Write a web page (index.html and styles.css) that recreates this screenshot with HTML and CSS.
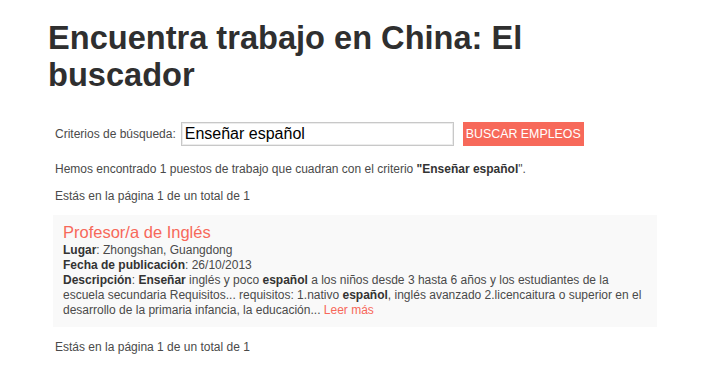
FILE: index.html
```html
<!DOCTYPE html>
<html lang="es">
<head>
<meta charset="utf-8">
<title>Encuentra trabajo en China: El buscador</title>
<link rel="stylesheet" href="styles.css">
</head>
<body>
<div class="page">
  <h1 class="title">Encuentra trabajo en China: El buscador</h1>
  <div class="content">
    <form class="search" onsubmit="return false">
      <label class="search-label" for="q">Criterios de búsqueda:</label>
      <input class="search-input" id="q" type="text" value="Enseñar español">
      <button class="search-btn" type="submit">Buscar empleos</button>
    </form>
    <p class="info">Hemos encontrado 1 puestos de trabajo que cuadran con el criterio <b>"Enseñar español</b>".</p>
    <p class="info pages-top">Estás en la página 1 de un total de 1</p>
    <div class="job">
      <a class="job-title" href="#">Profesor/a de Inglés</a>
      <div class="job-line"><b>Lugar</b>: Zhongshan, Guangdong</div>
      <div class="job-line"><b>Fecha de publicación</b>: 26/10/2013</div>
      <div class="job-line"><b>Descripción</b>: <b>Enseñar</b> inglés y poco <b>español</b> a los niños desde 3 hasta 6 años y los estudiantes de la escuela secundaria Requisitos... requisitos: 1.nativo <b>español</b>, inglés avanzado 2.licencaitura o superior en el desarrollo de la primaria infancia, la educación... <a class="more" href="#">Leer más</a></div>
    </div>
    <p class="info pages-bottom">Estás en la página 1 de un total de 1</p>
  </div>
</div>
</body>
</html>
```
FILE: styles.css
```css
html, body {
  margin: 0;
  padding: 0;
  background: #ffffff;
}
body {
  font-family: "Liberation Sans", Arial, sans-serif;
  font-size: 12px;
  color: #4a4a4a;
}
.page {
  padding: 0 48px;
}
.title {
  margin: 19px 0 0;
  font-size: 32.6px;
  line-height: 37px;
  font-weight: bold;
  color: #2f2f2f;
  width: 520px;
}
.content {
  padding-left: 7px;
}
.search {
  display: flex;
  align-items: center;
  margin: 28px 0 16px;
  height: 25px;
}
.search-label {
  font-size: 12px;
  color: #4a4a4a;
  margin-right: 5px;
}
.search-input {
  box-sizing: border-box;
  width: 273px;
  height: 24px;
  border: 1px solid #c8c8c8;
  box-shadow: inset 0 0 0 1px #ececec;
  padding: 0 3px;
  font-family: "Liberation Sans", Arial, sans-serif;
  font-size: 16px;
  color: #000;
  outline: none;
}
.search-btn {
  margin-left: 9px;
  height: 24px;
  width: 121px;
  padding: 0;
  border: none;
  background: #f7695a;
  color: #ffffff;
  font-family: "Liberation Sans", Arial, sans-serif;
  font-size: 12.4px;
  text-transform: uppercase;
}
.info {
  margin: 12px 0;
  line-height: 15px;
}
.info b {
  color: #333;
}
.pages-top {
  margin-bottom: 11px;
}
.job {
  margin-left: -2px;
  width: 588px;
  padding: 8px 6px 9px 10px;
  background: #f9f9f9;
}
.job-title {
  display: block;
  font-size: 16.5px;
  line-height: 18px;
  margin-bottom: 2px;
  color: #f7685a;
  text-decoration: none;
}
.job-line {
  line-height: 15px;
}
.job-line b {
  color: #333;
}
.more {
  color: #f7685a;
  text-decoration: none;
}
.pages-bottom {
  margin-top: 13px;
}
```
